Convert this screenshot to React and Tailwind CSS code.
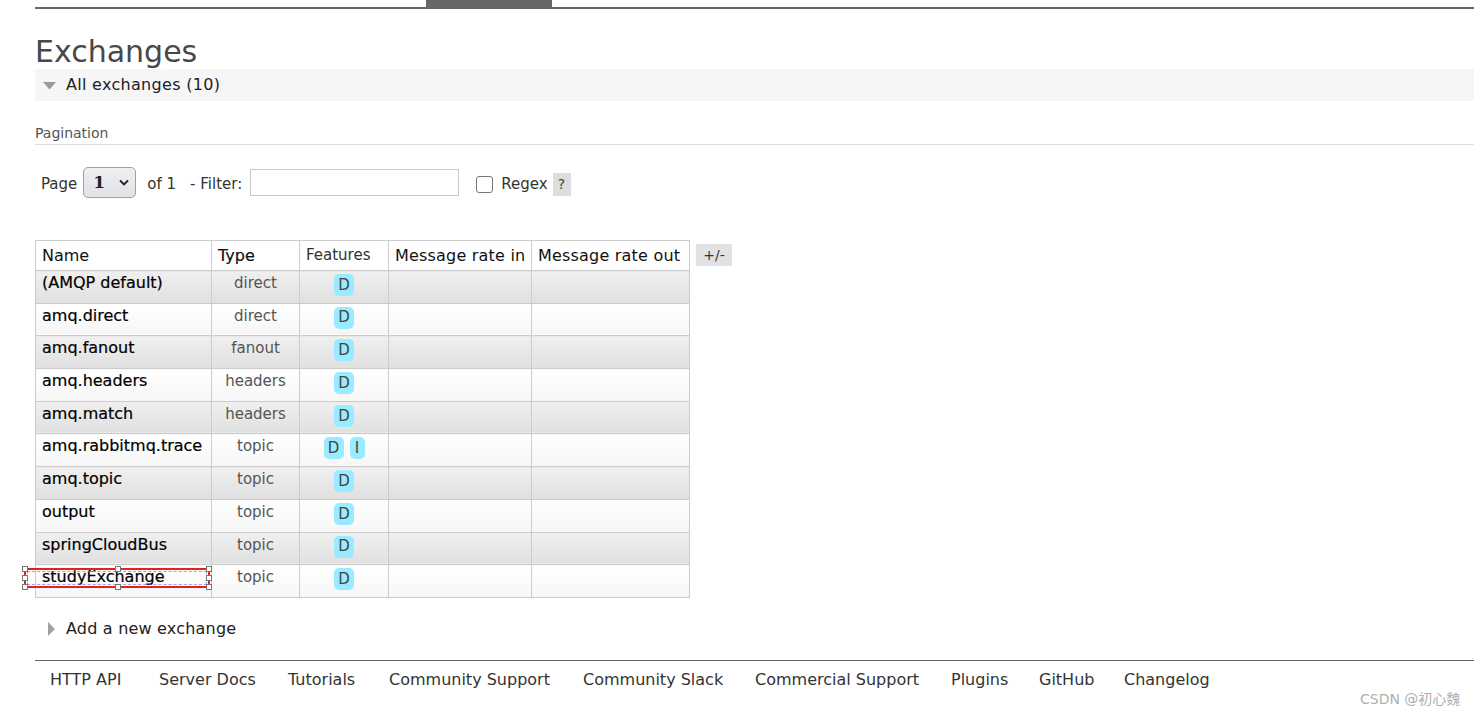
import React from "react";

const rows = [
  { name: "(AMQP default)", type: "direct", f: ["D"] },
  { name: "amq.direct", type: "direct", f: ["D"] },
  { name: "amq.fanout", type: "fanout", f: ["D"] },
  { name: "amq.headers", type: "headers", f: ["D"] },
  { name: "amq.match", type: "headers", f: ["D"] },
  { name: "amq.rabbitmq.trace", type: "topic", f: ["D", "I"] },
  { name: "amq.topic", type: "topic", f: ["D"] },
  { name: "output", type: "topic", f: ["D"] },
  { name: "springCloudBus", type: "topic", f: ["D"] },
  { name: "studyExchange", type: "topic", f: ["D"] },
];

const links = [
  { t: "HTTP API", w: "w-[109px]" },
  { t: "Server Docs", w: "w-[129px]" },
  { t: "Tutorials", w: "w-[101px]" },
  { t: "Community Support", w: "w-[194px]" },
  { t: "Community Slack", w: "w-[172px]" },
  { t: "Commercial Support", w: "w-[196px]" },
  { t: "Plugins", w: "w-[88px]" },
  { t: "GitHub", w: "w-[85px]" },
  { t: "Changelog", w: "w-[100px]" },
];

function Handle({ className }) {
  return <div className={"absolute w-[6px] h-[6px] bg-white border border-[#777] " + className} />;
}

export default function App() {
  return (
    <div className="relative w-full h-[715px] overflow-hidden bg-white text-[#222] font-['DejaVu_Sans',sans-serif]">
      <div className="pl-[35px]">
        {/* top nav bar line */}
        <div className="h-[9px] border-b-2 border-[#666]">
          <div className="ml-[391px] w-[126px] h-full bg-[#666]" />
        </div>

        {/* heading */}
        <div className="h-[60px] pt-[25px]">
          <h1 className="text-[30px] leading-[36px] text-[#484848]">Exchanges</h1>
        </div>

        {/* All exchanges bar */}
        <div className="h-[32px] bg-[#f6f6f6] flex items-center pl-[8px]">
          <svg width="13" height="8" viewBox="0 0 13 8" className="mt-[1px]">
            <polygon points="0,0 13,0 6.5,7.5" fill="#9a9a9a" />
          </svg>
          <span className="ml-[10px] text-[16px] tracking-[0.3px] text-[#222]">All exchanges (10)</span>
        </div>

        {/* Pagination label */}
        <div className="mt-[20px] h-[24px] border-b border-[#ddd] text-[14px] leading-[25px] text-[#555]">
          Pagination
        </div>

        {/* pagination row */}
        <div className="mt-[22px] h-[31px] flex items-center pl-[6px] pt-[3px] text-[15px] text-[#333]">
          <span>Page</span>
          <div className="ml-[6px] -mt-[3px] w-[53px] h-[31px] rounded-[5px] border border-[#a0a0a0] bg-gradient-to-b from-[#f0f0f3] to-[#e1e1e6] flex items-center pl-[9px]">
            <span className="text-[17px] font-semibold text-[#222] font-['DejaVu_Serif',serif]">1</span>
            <svg width="10" height="7" viewBox="0 0 10 7" className="ml-[14px]">
              <polyline points="1,1.5 5,5.5 9,1.5" fill="none" stroke="#222" strokeWidth="1.8" />
            </svg>
          </div>
          <span className="ml-[11px]">of 1</span>
          <span className="ml-[14px]">- Filter:</span>
          <div className="ml-[8px] -mt-[3px] w-[209px] h-[27px] border border-[#c8c8c8] bg-white" />
          <div className="ml-[17px] w-[17px] h-[17px] rounded-[3px] border-[1.5px] border-[#777] bg-white" />
          <span className="ml-[8px]">Regex</span>
          <span className="ml-[5px] w-[18px] h-[23px] bg-[#ddd] flex items-center justify-center text-[14px] text-[#444]">?</span>
        </div>

        {/* table */}
        <div className="mt-[42px] flex items-start">
          <table className="border-collapse w-[654px] table-fixed">
            <colgroup>
              <col className="w-[176px]" />
              <col className="w-[88px]" />
              <col className="w-[89px]" />
              <col className="w-[143px]" />
              <col className="w-[158px]" />
            </colgroup>
            <thead>
              <tr className="h-[30px]">
                <th className="border border-[#ccc] text-left font-normal text-[16px] text-[#111] px-[6px]">Name</th>
                <th className="border border-[#ccc] text-left font-normal text-[16px] text-[#111] px-[6px] [-webkit-text-stroke:0.2px_#111]">Type</th>
                <th className="border border-[#ccc] text-left font-normal text-[15px] text-[#333] px-[6px]">Features</th>
                <th className="border border-[#ccc] text-left font-normal text-[16px] text-[#111] px-[6px] whitespace-nowrap tracking-[0.2px]">Message rate in</th>
                <th className="border border-[#ccc] text-left font-normal text-[16px] text-[#111] px-[6px] whitespace-nowrap tracking-[0.2px]">Message rate out</th>
              </tr>
            </thead>
            <tbody>
              {rows.map((r, i) => {
                const bg =
                  i % 2 === 0
                    ? "bg-gradient-to-b from-[#f0f0f0] to-[#e0e0e0]"
                    : "bg-gradient-to-b from-[#ffffff] to-[#f6f6f6]";
                return (
                  <tr key={r.name} className="h-[32.7px]">
                    <td className={"border border-[#ccc] align-top px-[6px] pt-[1px] text-[16px] leading-[22px] text-black whitespace-nowrap [-webkit-text-stroke:0.2px_#000] " + bg}>
                      {r.name}
                    </td>
                    <td className={"border border-[#ccc] align-top text-center pt-[1px] text-[15px] leading-[22px] text-[#555] " + bg}>
                      {r.type}
                    </td>
                    <td className={"border border-[#ccc] align-top pt-[3px] " + bg}>
                      <div className="flex justify-center gap-[6px]">
                        {r.f.map((f) => (
                          <span
                            key={f}
                            className={
                              "h-[22px] rounded-[5px] bg-[#99ebff] flex items-center justify-center text-[15px] text-[#444] " +
                              (f === "D" ? "w-[20px]" : "w-[15px]")
                            }
                          >
                            {f}
                          </span>
                        ))}
                      </div>
                    </td>
                    <td className={"border border-[#ccc] " + bg} />
                    <td className={"border border-[#ccc] " + bg} />
                  </tr>
                );
              })}
            </tbody>
          </table>
          <div className="ml-[6px] mt-[4px] w-[36px] h-[22px] bg-[#e2e2e2] flex items-center justify-center text-[14px] text-[#333]">
            +/-
          </div>
        </div>

        {/* Add a new exchange */}
        <div className="mt-[18px] h-[26px] flex items-center pl-[13px]">
          <svg width="7" height="14" viewBox="0 0 7 14">
            <polygon points="0,0 7,7 0,14" fill="#a0a0a0" />
          </svg>
          <span className="ml-[11px] text-[16px] tracking-[0.2px] text-[#222]">Add a new exchange</span>
        </div>

        {/* footer */}
        <div className="mt-[18px] border-t border-[#666] h-[40px] flex items-center pl-[15px] text-[16px] text-[#333]">
          {links.map((l) => (
            <span key={l.t} className={"whitespace-nowrap shrink-0 " + l.w}>{l.t}</span>
          ))}
        </div>
      </div>

      {/* selection overlay around studyExchange */}
      <div className="absolute left-[24px] top-[568px] w-[186px] h-[20px] border-2 border-[#e8201c]">
        <div className="absolute inset-0 border border-dashed border-white" />
        <div className="absolute inset-[1px] border border-dashed border-[#5a6fd0] opacity-60" />
        <Handle className="-left-[4px] -top-[4px]" />
        <Handle className="left-[89px] -top-[4px]" />
        <Handle className="-right-[4px] -top-[4px]" />
        <Handle className="-left-[4px] top-[5px]" />
        <Handle className="-right-[4px] top-[5px]" />
        <Handle className="-left-[4px] -bottom-[4px]" />
        <Handle className="left-[89px] -bottom-[4px]" />
        <Handle className="-right-[4px] -bottom-[4px]" />
      </div>

      {/* watermark */}
      <div className="absolute left-[1360px] top-[689px] text-[14px] text-[#b0b0b0] font-['DejaVu_Sans','Noto_Sans_CJK_SC',sans-serif] whitespace-nowrap">
        CSDN @初心魏
      </div>
    </div>
  );
}
